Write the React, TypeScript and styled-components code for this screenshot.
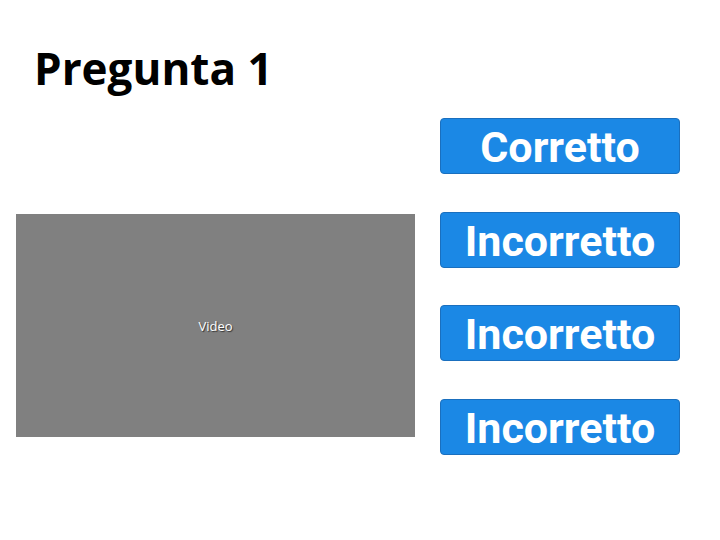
import React from 'react';
import styled, { createGlobalStyle } from 'styled-components';

const GlobalStyle = createGlobalStyle`
  html, body {
    margin: 0;
    padding: 0;
    background: #ffffff;
  }
  body {
    font-family: "Open Sans", "Noto Sans", sans-serif;
  }
`;

const Page = styled.div`
  width: 720px;
  height: 540px;
  box-sizing: border-box;
  padding: 0 16px;
`;

const Title = styled.h1`
  margin: 0;
  padding: 42px 0 0 18px;
  height: 118px;
  box-sizing: border-box;
  font-family: "Open Sans", "Noto Sans", sans-serif;
  font-weight: 700;
  font-size: 44px;
  line-height: 52px;
  color: #000000;
`;

const Body = styled.div`
  display: flex;
  align-items: flex-start;
  gap: 25px;
`;

const Video = styled.div`
  width: 399px;
  height: 223px;
  margin-top: 96px;
  background: #808080;
  display: flex;
  align-items: center;
  justify-content: center;
  color: #ffffff;
  font-family: "Open Sans", "Noto Sans", sans-serif;
  font-size: 13px;
  text-shadow: 1px 1px 1px #333333;
`;

const Answers = styled.div`
  display: flex;
  flex-direction: column;
  gap: 37.5px;
`;

const AnswerButton = styled.button`
  width: 240px;
  height: 56px;
  box-sizing: border-box;
  padding: 2px 0 0;
  background: #1b88e5;
  border: 1px solid #1a6fbe;
  border-radius: 4px;
  color: #ffffff;
  font-family: Roboto, "Liberation Sans", sans-serif;
  font-weight: 700;
  font-size: 43px;
  line-height: 52px;
  text-align: center;
  cursor: pointer;
`;

const answers = ['Corretto', 'Incorretto', 'Incorretto', 'Incorretto'];

const App: React.FC = () => {
  return (
    <>
      <GlobalStyle />
      <Page>
        <Title>Pregunta 1</Title>
        <Body>
          <Video>Video</Video>
          <Answers>
            {answers.map((a, i) => (
              <AnswerButton key={i}>{a}</AnswerButton>
            ))}
          </Answers>
        </Body>
      </Page>
    </>
  );
};

export default App;
